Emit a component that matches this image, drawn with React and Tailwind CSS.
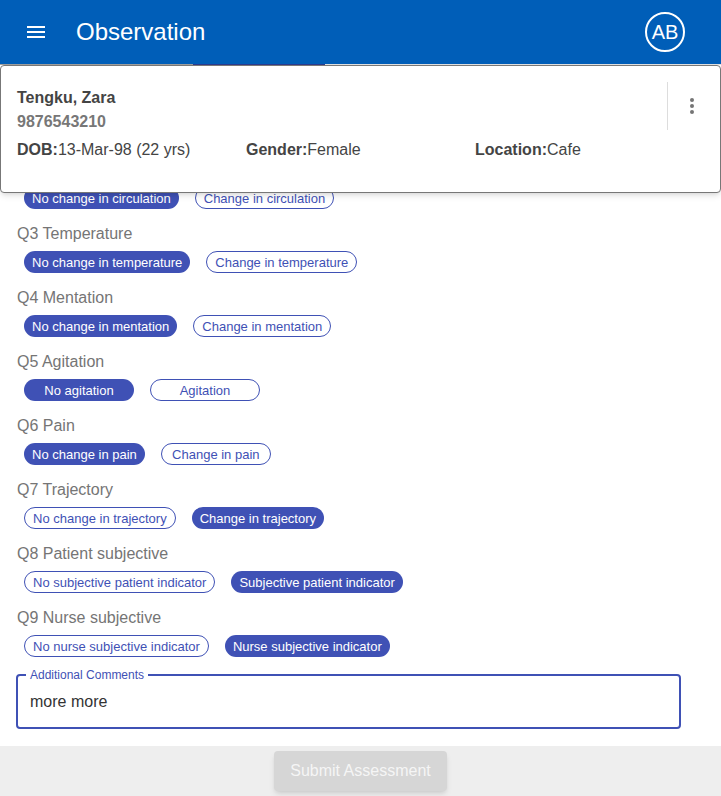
import React, { useState } from "react";

const questions = [
  { id: "q2", label: "Q2 Circulation", options: ["No change in circulation", "Change in circulation"], value: 0 },
  { id: "q3", label: "Q3 Temperature", options: ["No change in temperature", "Change in temperature"], value: 0 },
  { id: "q4", label: "Q4 Mentation", options: ["No change in mentation", "Change in mentation"], value: 0 },
  { id: "q5", label: "Q5 Agitation", options: ["No agitation", "Agitation"], value: 0 },
  { id: "q6", label: "Q6 Pain", options: ["No change in pain", "Change in pain"], value: 0 },
  { id: "q7", label: "Q7 Trajectory", options: ["No change in trajectory", "Change in trajectory"], value: 1 },
  { id: "q8", label: "Q8 Patient subjective", options: ["No subjective patient indicator", "Subjective patient indicator"], value: 1 },
  { id: "q9", label: "Q9 Nurse subjective", options: ["No nurse subjective indicator", "Nurse subjective indicator"], value: 1 },
];

const Chip = ({ label, selected, onClick }) => (
  <button
    onClick={onClick}
    className={
      selected
        ? "h-[22px] min-w-[110px] px-2 rounded-full bg-[#3f51b5] text-white text-[13px] leading-none flex items-center justify-center"
        : "h-[22px] min-w-[110px] px-2 rounded-full border border-[#3f51b5] text-[#3f51b5] bg-white text-[13px] leading-none flex items-center justify-center"
    }
  >
    {label}
  </button>
);

const App = () => {
  const [answers, setAnswers] = useState(
    Object.fromEntries(questions.map((q) => [q.id, q.value]))
  );
  const [comments, setComments] = useState("more more");

  return (
    <div
      className="relative w-[721px] h-[796px] flex flex-col overflow-hidden bg-white"
      style={{ fontFamily: '"Liberation Sans", Arial, sans-serif' }}
    >
      {/* App bar */}
      <header className="h-16 shrink-0 bg-[#005eb8] flex items-center text-white">
        <svg className="ml-6 w-6 h-6" viewBox="0 0 24 24" fill="currentColor">
          <path d="M3 18h18v-2H3v2zm0-5h18v-2H3v2zm0-7v2h18V6H3z" />
        </svg>
        <h1 className="ml-[28px] text-[24px] leading-none">Observation</h1>
        <div className="ml-auto mr-[36px] w-10 h-10 rounded-full border-2 border-white flex items-center justify-center text-[20px]">
          AB
        </div>
      </header>

      {/* Scrolling questionnaire */}
      <main className="flex-1 overflow-hidden">
        <div className="flex h-px">
          <div className="w-[193px] bg-[#9e9e9e]" />
          <div className="w-[132px] bg-[#2c3b8f]" />
          <div className="flex-1 bg-[#e0e0e0]" />
        </div>
        <div className="pl-[17px] pt-[94px]">
          {questions.map((q) => (
            <div key={q.id} className="pb-[14px]">
              <p className="text-[16px] leading-[22px] text-[#757575]">{q.label}</p>
              <div className="mt-[6px] ml-[7px] flex gap-4">
                {q.options.map((opt, i) => (
                  <Chip
                    key={opt}
                    label={opt}
                    selected={answers[q.id] === i}
                    onClick={() => setAnswers({ ...answers, [q.id]: i })}
                  />
                ))}
              </div>
            </div>
          ))}

          {/* Comments field */}
          <div className="relative mt-[3px] -ml-px w-[665px] h-[55px] rounded border-2 border-[#3f51b5]">
            <span className="absolute -top-[8px] left-[8px] px-1 bg-white text-[12px] leading-[14px] text-[#3f51b5]">
              Additional Comments
            </span>
            <input
              value={comments}
              onChange={(e) => setComments(e.target.value)}
              className="w-full pl-3 pt-[17px] text-[16px] leading-[18px] text-[#333] outline-none bg-transparent"
            />
          </div>
        </div>
      </main>

      {/* Footer */}
      <footer className="h-[50px] shrink-0 bg-[#eeeeee] flex items-center justify-center">
        <button
          disabled
          className="h-10 w-[173px] rounded bg-[#d6d6d6] text-[#f5f5f5] text-[16px] shadow-md"
        >
          Submit Assessment
        </button>
      </footer>

      {/* Patient banner */}
      <div className="absolute top-[65px] left-0 w-full h-[128px] bg-white border border-[#777] rounded shadow-md px-4 text-[#444]">
        <div className="flex justify-between pt-4">
          <div className="pt-[7px]">
            <p className="text-[16px] leading-[18px] font-bold">Tengku, Zara</p>
            <p className="mt-[6px] text-[16px] leading-[18px] font-bold text-[#777]">9876543210</p>
          </div>
          <div className="flex items-start">
            <div className="w-px h-12 bg-[#ddd]" />
            <svg className="ml-3 mt-3 w-6 h-6 text-[#757575]" viewBox="0 0 24 24" fill="currentColor">
              <circle cx="12" cy="6" r="2" />
              <circle cx="12" cy="12" r="2" />
              <circle cx="12" cy="18" r="2" />
            </svg>
          </div>
        </div>
        <div className="mt-[10px] grid grid-cols-[229px_229px_229px] text-[16px] leading-[18px]">
          <p><span className="font-bold">DOB:</span>13-Mar-98 (22 yrs)</p>
          <p><span className="font-bold">Gender:</span>Female</p>
          <p><span className="font-bold">Location:</span>Cafe</p>
        </div>
      </div>
    </div>
  );
};

export default App;
